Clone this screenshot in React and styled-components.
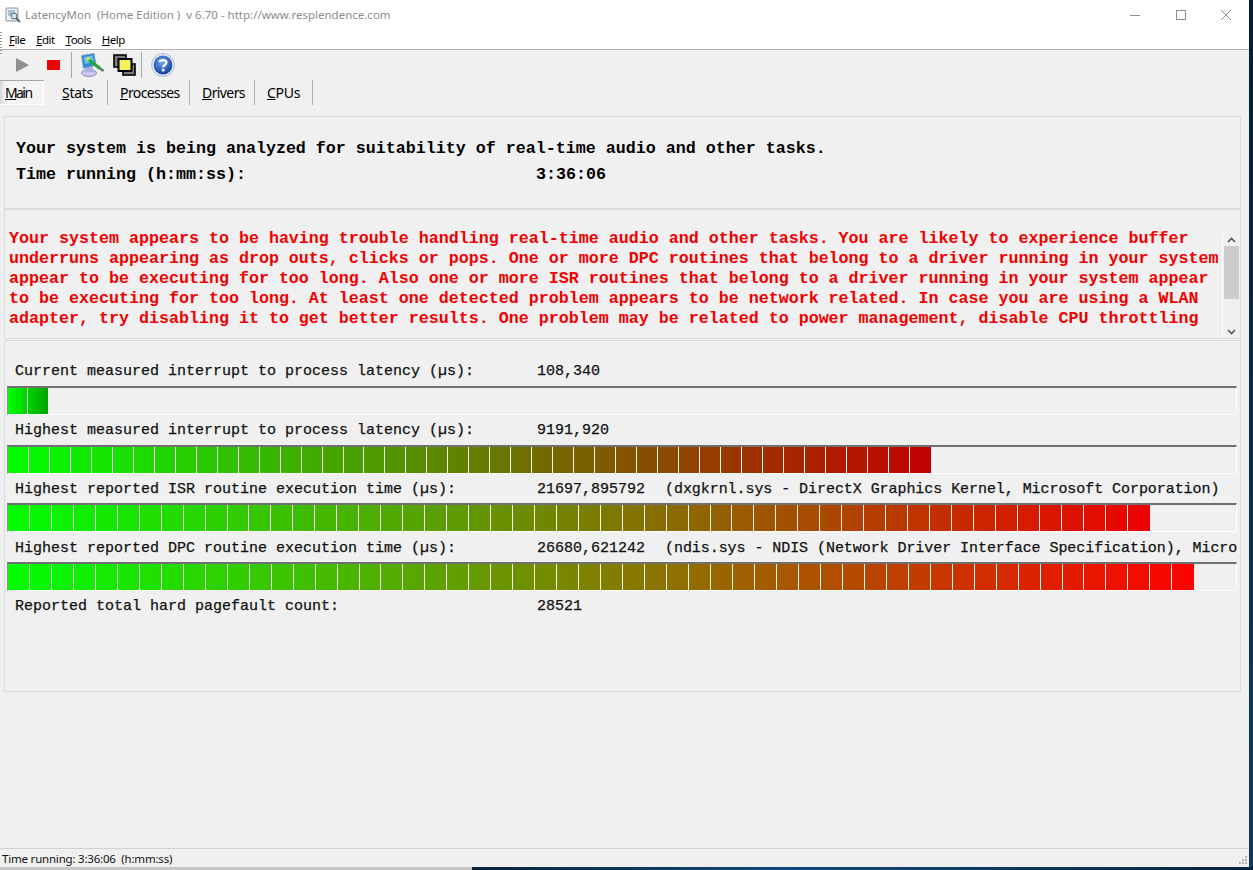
import React from 'react';
import styled, { createGlobalStyle } from 'styled-components';

const GlobalStyle = createGlobalStyle`
  html, body { margin: 0; padding: 0; background: #0b2a48; overflow: hidden; }
  * { box-sizing: border-box; }
`;

const redLines = [
  'Your system appears to be having trouble handling real-time audio and other tasks. You are likely to experience buffer',
  'underruns appearing as drop outs, clicks or pops. One or more DPC routines that belong to a driver running in your system',
  'appear to be executing for too long. Also one or more ISR routines that belong to a driver running in your system appear',
  'to be executing for too long. At least one detected problem appears to be network related. In case you are using a WLAN',
  'adapter, try disabling it to get better results. One problem may be related to power management, disable CPU throttling',
];

const metrics = [
  { label: 'Current measured interrupt to process latency (µs):', value: '108,340', bar: { count: 2, pitch: 20, end: [0, 165, 0] } },
  { label: 'Highest measured interrupt to process latency (µs):', value: '9191,920', bar: { count: 44, pitch: 20.98, end: [195, 0, 0] } },
  { label: 'Highest reported ISR routine execution time (µs):', value: '21697,895792', note: '(dxgkrnl.sys - DirectX Graphics Kernel, Microsoft Corporation)', bar: { count: 52, pitch: 21.96, end: [238, 0, 0] } },
  { label: 'Highest reported DPC routine execution time (µs):', value: '26680,621242', note: '(ndis.sys - NDIS (Network Driver Interface Specification), Micro', bar: { count: 54, pitch: 21.98, end: [255, 0, 0] } },
  { label: 'Reported total hard pagefault count:', value: '28521' },
];

const tabs = [
  { key: 'M', rest: 'ain', active: true, width: 44, track: -1.6 },
  { key: 'S', rest: 'tats', width: 58, track: -0.3 },
  { key: 'P', rest: 'rocesses', width: 82, track: -0.6 },
  { key: 'D', rest: 'rivers', width: 65, track: -0.6 },
  { key: 'C', rest: 'PUs', width: 58, track: -0.3 },
];

const menus = [['F', 'ile'], ['E', 'dit'], ['T', 'ools'], ['H', 'elp']];

const mix = (end, t) => {
  const r = Math.round(end[0] * t);
  const g = Math.round(255 + (end[1] - 255) * t);
  return `rgb(${r},${g},0)`;
};

const Desktop = styled.div`
  width: 1253px;
  height: 870px;
  display: flex;
  flex-direction: column;
`;

const Window = styled.div`
  width: 1249px;
  height: 867px;
  background: #f0f0f0;
  display: flex;
  flex-direction: column;
  font-family: "Noto Sans", sans-serif;
  color: #000;
`;

const BehindWindow = styled.div`
  width: 472px;
  height: 3px;
  background: #c4c4c4;
`;

const TitleBar = styled.div`
  height: 30px;
  background: #fff;
  display: flex;
  align-items: center;
  padding: 0 0 1px 5px;
`;

const AppTitle = styled.span`
  margin-left: 4px;
  font-size: 11.5px;
  color: #8c8c8c;
  white-space: pre;
`;

const WindowButtons = styled.div`
  margin-left: auto;
  display: flex;
  align-items: center;
  gap: 33.5px;
  padding-right: 17px;
`;

const MenuBar = styled.div`
  position: relative;
  height: 20px;
  background: #fff;
  border-bottom: 1px solid #b4b4b4;
  display: flex;
  align-items: center;
  gap: 11px;
  padding: 0 0 1px 9px;
  font-size: 11.5px;
  letter-spacing: -0.55px;
`;

const Gripper = styled.div`
  position: absolute;
  left: 0;
  top: 2px;
  width: 2px;
  height: 24px;
  background: repeating-linear-gradient(#9a9a9a 0 1px, transparent 1px 3px);
`;

const Toolbar = styled.div`
  height: 30px;
  display: flex;
  align-items: center;
  padding-left: 14px;
`;

const ToolButton = styled.div`
  display: flex;
  align-items: center;
  justify-content: center;
  width: ${p => p.$w}px;
  height: 30px;
  margin-left: ${p => p.$ml || 0}px;
`;

const ToolSep = styled.div`
  width: 1px;
  height: 26px;
  background: #a8a8a8;
  margin: 0 ${p => p.$right || 0}px 0 ${p => p.$left || 0}px;
`;

const TabRow = styled.div`
  height: 25px;
  display: flex;
  align-items: stretch;
  margin-bottom: 11px;
`;

const Tab = styled.div`
  display: flex;
  align-items: center;
  font-size: 14px;
  letter-spacing: ${p => p.$track}px;
  padding: 0 0 0 ${p => (p.$active ? 5 : 12)}px;
  margin-right: ${p => (p.$active ? 6 : 0)}px;
  width: ${p => p.$w}px;
  border-right: ${p => (p.$active ? 'none' : '1px solid #b0b0b0')};
  ${p => p.$active && `
    background: linear-gradient(to right, #d6d6d6, #f4f4f4 5px);
    border-top: 1px solid #a8a8a8;
    border-bottom: 1px solid #fff;
    box-shadow: inset -1px 0 0 #fff;
  `}
`;

const Content = styled.div`
  flex: 1;
  display: flex;
  flex-direction: column;
  padding-left: 4px;
`;

const Panel = styled.div`
  width: 1237px;
  height: ${p => p.$h}px;
  margin-bottom: ${p => p.$gap || 0}px;
  border: 1px solid #dcdcdc;
  font-family: "Liberation Mono", monospace;
`;

const SummaryPanel = styled(Panel)`
  padding: 19px 0 0 11px;
  font-size: 16.67px;
  font-weight: bold;
  line-height: 26px;
`;

const SummaryRow = styled.div`
  display: flex;
  white-space: pre;
`;

const SummaryLabel = styled.span`
  width: 520px;
`;

const WarningPanel = styled(Panel)`
  display: flex;
  justify-content: space-between;
  align-items: flex-end;
  padding: 19px 1px 0 4px;
`;

const WarningText = styled.div`
  align-self: flex-start;
  font-size: 16.67px;
  font-weight: bold;
  line-height: 20px;
  color: #f00000;
  white-space: pre;
`;

const ScrollBar = styled.div`
  width: 17px;
  height: 105px;
  display: flex;
  flex-direction: column;
  align-items: center;
  border-left: 1px solid #fff;
`;

const ScrollArrow = styled.div`
  height: 13px;
  display: flex;
  align-items: center;
  justify-content: center;
`;

const ScrollThumb = styled.div`
  width: 15px;
  height: 53px;
  background: #cdcdcd;
`;

const ScrollTrack = styled.div`
  flex: 1;
`;

const MetricsPanel = styled(Panel)`
  padding: 15px 0 0 2px;
`;

const MetricLabel = styled.div`
  height: 29.75px;
  display: flex;
  align-items: center;
  padding: 2px 0 0 8px;
  width: 1232px;
  font-size: 15px;
  white-space: pre;
  color: #111;
  -webkit-text-stroke: 0.25px #111;
`;

const LabelText = styled.span`
  flex: none;
  width: 522px;
`;

const ValueText = styled.span`
  flex: none;
  width: 128px;
`;

const NoteText = styled.span`
  letter-spacing: -0.06px;
`;

const Bar = styled.div`
  width: 1230px;
  height: 29px;
  display: flex;
  background: #f0f0f0;
  border-top: 2px solid #707070;
  border-left: 1px solid #909090;
  border-bottom: 1px solid #fff;
  border-right: 1px solid #fff;
`;

const Segment = styled.div`
  flex: none;
  height: 100%;
  border-right: 1px solid #f4f4f4;
  &:last-child { border-right: none; }
`;

const StatusBar = styled.div`
  height: 19px;
  position: relative;
  border-top: 1px solid #d0d0d0;
  display: flex;
  align-items: center;
  padding: 0 0 0 2px;
  font-size: 11.5px;
  letter-spacing: -0.2px;
  white-space: pre;
  color: #111;
`;

const Grip = styled.svg`
  position: absolute;
  right: 0;
  bottom: 0;
`;

const TaskBarRight = styled.div`
  position: absolute;
  right: 0;
  top: 0;
  width: 4px;
  height: 870px;
  background: linear-gradient(#051c33, #0e3a60);
`;

const TaskBarBottom = styled.div`
  position: absolute;
  left: 472px;
  right: 0;
  top: 867px;
  height: 3px;
  background: linear-gradient(to right, #0b2540, #0f4a7c 40%, #0b2540);
`;

const AppIcon = () => (
  <svg width="16" height="16" viewBox="0 0 16 16">
    <rect x="1" y="1" width="12" height="13" rx="1" fill="#eef1f4" stroke="#8a9099" />
    <rect x="3" y="3" width="7" height="6" fill="#a8c2d8" />
    <circle cx="9" cy="9" r="3" fill="#cfe2f0" stroke="#5a6672" />
    <path d="M11 11 L15 15" stroke="#5a6672" strokeWidth="2" />
  </svg>
);

const WinIcon = ({ children }) => (
  <svg width="12" height="12" viewBox="0 0 12 12" fill="none" stroke="#8f8f8f" strokeWidth="1">{children}</svg>
);

const AnalyzeIcon = () => (
  <svg width="24" height="24" viewBox="0 0 24 24">
    <ellipse cx="9" cy="20" rx="7.5" ry="3.5" fill="#c9c6ef" stroke="#8d8ac4" />
    <path d="M6 14 L13 13 L13 19 L6 19 Z" fill="#aab0e0" />
    <path d="M1.5 2.5 L14 0.5 L16 12 L3.5 15.5 Z" fill="#2f86dc" stroke="#8aa0c8" strokeWidth="1" />
    <path d="M3.5 4 L12.5 2.5 L14 9 L5 11 Z" fill="#5cc6f0" />
    <path d="M6 5 L10 4 L10 7 L7 8 Z" fill="#f0d850" />
    <path d="M9 7 L20 15.5" stroke="#22a83e" strokeWidth="3.4" />
    <path d="M19 14.5 L23.5 18" stroke="#5e7d62" strokeWidth="2.4" />
  </svg>
);

const WindowsIcon = () => (
  <svg width="23" height="22" viewBox="0 0 23 22">
    <rect x="1" y="1" width="12" height="12" fill="#7c7c7c" stroke="#000" strokeWidth="1.6" />
    <rect x="10" y="10" width="12" height="11" fill="#7c7c7c" stroke="#000" strokeWidth="1.6" />
    <rect x="5.5" y="5" width="13" height="12" fill="#f6f05a" stroke="#000" strokeWidth="2" />
  </svg>
);

const HelpIcon = () => (
  <svg width="24" height="24" viewBox="0 0 24 24">
    <defs>
      <radialGradient id="helpBlue" cx="45%" cy="35%" r="65%">
        <stop offset="0%" stopColor="#6ea6ee" />
        <stop offset="100%" stopColor="#123f9e" />
      </radialGradient>
    </defs>
    <circle cx="12" cy="12" r="11.4" fill="#e8edf6" stroke="#9aaac6" strokeWidth=".8" />
    <circle cx="12" cy="12" r="9.4" fill="url(#helpBlue)" />
    <path d="M8.6 9.2 C8.8 6.6 15.4 6.2 15.4 9.6 C15.4 12 12.2 11.8 12.2 14.2" fill="none" stroke="#fff" strokeWidth="2.4" />
    <rect x="10.9" y="15.8" width="2.6" height="2.6" fill="#fff" />
  </svg>
);

const Caret = ({ up }) => (
  <svg width="9" height="6" viewBox="0 0 9 6" fill="none" stroke="#555" strokeWidth="1.6">
    <path d={up ? 'M1 5 L4.5 1.5 L8 5' : 'M1 1 L4.5 4.5 L8 1'} />
  </svg>
);

const App = () => (
  <Desktop>
    <GlobalStyle />
    <Window>
      <TitleBar>
        <AppIcon />
        <AppTitle>LatencyMon  (Home Edition )  v 6.70 - http://www.resplendence.com</AppTitle>
        <WindowButtons>
          <WinIcon><path d="M1 6.5 H11" /></WinIcon>
          <WinIcon><rect x="1.5" y="1.5" width="9" height="9" /></WinIcon>
          <WinIcon><path d="M1 1 L11 11 M11 1 L1 11" /></WinIcon>
        </WindowButtons>
      </TitleBar>
      <MenuBar>
        <Gripper />
        {menus.map(([k, rest]) => <span key={k}><u>{k}</u>{rest}</span>)}
      </MenuBar>
      <Toolbar>
        <ToolButton $w={16}>
          <svg width="13" height="14" viewBox="0 0 13 14"><path d="M0 0 L13 7 L0 14 Z" fill="#8f8f8f" /></svg>
        </ToolButton>
        <ToolButton $w={24} $ml={11}>
          <svg width="13" height="10" viewBox="0 0 13 10"><rect width="13" height="10" fill="#f00000" /></svg>
        </ToolButton>
        <ToolSep $left={6} $right={8} />
        <ToolButton $w={24}><AnalyzeIcon /></ToolButton>
        <ToolButton $w={23} $ml={9}><WindowsIcon /></ToolButton>
        <ToolSep $left={5} $right={9} />
        <ToolButton $w={24}><HelpIcon /></ToolButton>
      </Toolbar>
      <TabRow>
        {tabs.map(t => (
          <Tab key={t.key} $active={t.active} $w={t.width} $track={t.track}>
            <span><u>{t.key}</u>{t.rest}</span>
          </Tab>
        ))}
      </TabRow>
      <Content>
        <SummaryPanel $h={93}>
          <div>Your system is being analyzed for suitability of real-time audio and other tasks.</div>
          <SummaryRow>
            <SummaryLabel>Time running (h:mm:ss):</SummaryLabel>
            <span>3:36:06</span>
          </SummaryRow>
        </SummaryPanel>
        <WarningPanel $h={130} $gap={1}>
          <WarningText>
            {redLines.map(line => <div key={line}>{line}</div>)}
          </WarningText>
          <ScrollBar>
            <ScrollArrow><Caret up /></ScrollArrow>
            <ScrollThumb />
            <ScrollTrack />
            <ScrollArrow><Caret /></ScrollArrow>
          </ScrollBar>
        </WarningPanel>
        <MetricsPanel $h={352}>
          {metrics.map(m => (
            <React.Fragment key={m.label}>
              <MetricLabel>
                <LabelText>{m.label}</LabelText>
                <ValueText>{m.value}</ValueText>
                {m.note && <NoteText>{m.note}</NoteText>}
              </MetricLabel>
              {m.bar && (
                <Bar>
                  {Array.from({ length: m.bar.count }, (_, i) => (
                    <Segment
                      key={i}
                      style={{
                        width: m.bar.pitch,
                        background: `linear-gradient(to right, ${mix(m.bar.end, i / m.bar.count)}, ${mix(m.bar.end, (i + 1) / m.bar.count)})`,
                      }}
                    />
                  ))}
                </Bar>
              )}
            </React.Fragment>
          ))}
        </MetricsPanel>
      </Content>
      <StatusBar>
        Time running: 3:36:06  (h:mm:ss)
        <Grip width="12" height="12" viewBox="0 0 12 12" fill="#b4b4b4">
          <rect x="8" y="1" width="2" height="2" />
          <rect x="5" y="4" width="2" height="2" />
          <rect x="8" y="4" width="2" height="2" />
          <rect x="2" y="7" width="2" height="2" />
          <rect x="5" y="7" width="2" height="2" />
          <rect x="8" y="7" width="2" height="2" />
        </Grip>
      </StatusBar>
    </Window>
    <BehindWindow />
    <TaskBarRight />
    <TaskBarBottom />
  </Desktop>
);

export default App;
